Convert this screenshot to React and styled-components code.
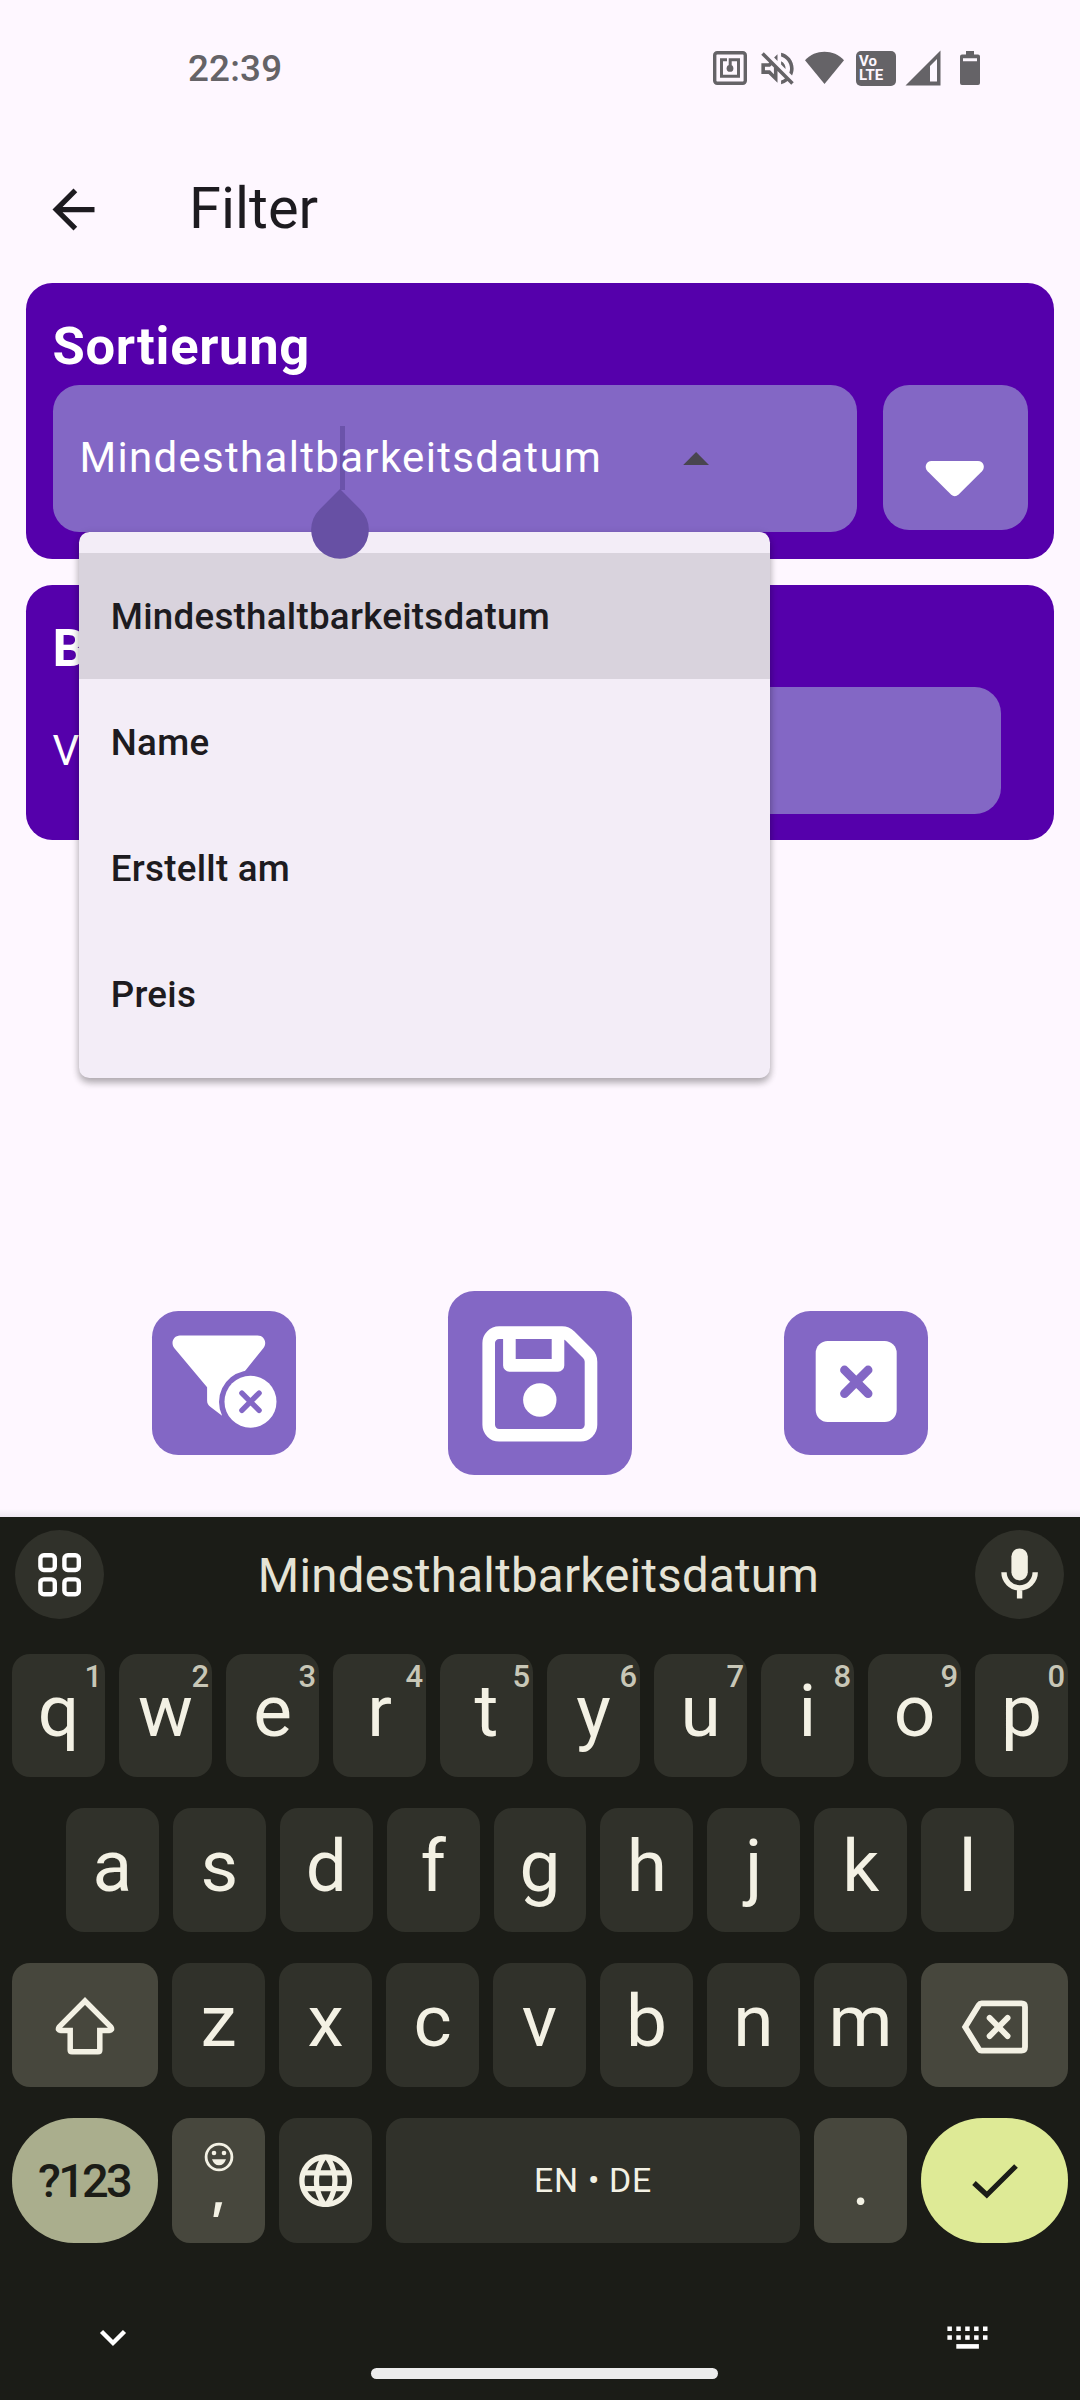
import React from "react";
import styled, { createGlobalStyle, css } from "styled-components";
import { MdLanguage, MdOutlineVolumeOff } from "react-icons/md";

const c = {
  surface: "#fef7ff",
  card: "#5500ab",
  control: "#8367c5",
  primary: "#6750a4",
  ink: "#1d1b20",
  menu: "#f3edf7",
  menuActive: "#d9d3dd",
  status: "#656367",
  kbd: "#1b1c17",
  key: "#30312a",
  keyAlt: "#47473d",
  keyText: "#f3f1e4",
  hint: "#c8c7b7",
};

const GlobalStyle = createGlobalStyle`
  * { box-sizing: border-box; }
  body {
    margin: 0;
    background: ${c.surface};
    font-family: Roboto, "Noto Sans", sans-serif;
    color: ${c.ink};
  }
  svg { display: block; flex: none; }
`;

const Screen = styled.div`
  width: 1080px;
  height: 2400px;
  display: flex;
  flex-direction: column;
  overflow: hidden;
`;

const Page = styled.main`
  position: relative;
  height: 1517px;
  flex: none;
  display: flex;
  flex-direction: column;
`;

const KeyboardShade = styled.div`
  position: absolute;
  left: 0;
  right: 0;
  bottom: 0;
  height: 8px;
  background: linear-gradient(rgba(60, 50, 80, 0), rgba(60, 50, 80, 0.08));
`;

/* status bar */
const StatusBar = styled.header`
  height: 136px;
  display: flex;
  align-items: center;
  justify-content: space-between;
  padding: 0 100px 0 188px;
  color: ${c.status};
`;

const Clock = styled.span`
  font-size: 36.75px;
  font-weight: 500;
  line-height: 44px;
  letter-spacing: 0.2px;
  padding-top: 2px;
`;

const StatusIcons = styled.div`
  display: flex;
  align-items: center;
  height: 36px;
`;

const StatusSlot = styled.span`
  display: flex;
  justify-content: center;
  align-items: center;
  width: ${(p) => p.$w}px;
  height: 36px;
  margin-left: ${(p) => p.$gap || 0}px;
`;

const VoLte = styled.span`
  display: flex;
  flex-direction: column;
  width: 40px;
  height: 35px;
  padding: 3px 0 0 3px;
  border-radius: 5px;
  background: ${c.status};
  color: ${c.surface};
  font-size: 15px;
  line-height: 14.6px;
  font-weight: 700;
`;

/* app bar */
const AppBar = styled.div`
  height: 147px;
  display: flex;
  align-items: center;
  padding-left: 42px;
  gap: 84px;
`;

const Title = styled.h1`
  margin: 0;
  padding-bottom: 4px;
  font-size: 57.75px;
  font-weight: 400;
  line-height: 74px;
`;

/* cards */
const Card = styled.section`
  margin: 0 26.25px 26.25px;
  padding: 26.25px;
  border-radius: 26.25px;
  background: ${c.card};
  color: #fff;
`;

const CardTitle = styled.h2`
  margin: 0;
  height: 76px;
  font-size: 52.5px;
  font-weight: 700;
  line-height: 75px;
  letter-spacing: 0.7px;
`;

const SortRow = styled.div`
  display: flex;
  gap: 26.25px;
  height: 147.2px;
`;

const SortField = styled.div`
  position: relative;
  flex: 1;
  display: flex;
  align-items: center;
  justify-content: space-between;
  padding: 0 147.4px 0 27px;
  border-radius: 26.25px;
  background: ${c.control};
`;

const FieldValue = styled.span`
  position: relative;
  z-index: 1;
  padding-bottom: 3px;
  font-size: 42px;
  line-height: 63px;
  letter-spacing: 1.31px;
`;

const Caret = styled.i`
  position: absolute;
  left: 287.5px;
  top: 41px;
  width: 5.25px;
  height: 64px;
  background: ${c.primary};
  opacity: 0.85;
`;

const CaretHandle = styled.svg`
  position: absolute;
  z-index: 3;
  left: 258.6px;
  top: 104px;
`;

const SquareButton = styled.button`
  width: ${(p) => p.$size}px;
  height: ${(p) => p.$size}px;
  padding: 0;
  border: 0;
  border-radius: 26.25px;
  background: ${c.control};
  color: #fff;
`;

const Menu = styled.ul`
  position: absolute;
  z-index: 2;
  left: 26.25px;
  top: 147.2px;
  width: 691.3px;
  margin: 0;
  padding: 21px 0;
  list-style: none;
  border-radius: 10.5px;
  background: ${c.menu};
  box-shadow: 0 5px 7px rgba(0, 0, 0, 0.24), 0 2px 8px rgba(0, 0, 0, 0.14);
`;

const MenuItem = styled.li`
  height: 126px;
  padding-left: 32px;
  font-size: 36.75px;
  font-weight: 500;
  line-height: 127px;
  letter-spacing: 0.26px;
  color: ${c.ink};
  background: ${(p) => (p.$active ? c.menuActive : "transparent")};
`;

const ConditionRow = styled.div`
  display: flex;
  align-items: center;
  height: 126.4px;
  padding-right: 26.25px;
  gap: 120px;
  font-size: 42px;
`;

const ConditionField = styled.div`
  flex: 1;
  height: 100%;
  border-radius: 26.25px;
  background: ${c.control};
`;

const Actions = styled.div`
  margin: auto 152px 42px;
  display: flex;
  align-items: center;
  justify-content: space-between;
`;

/* keyboard */
const Keyboard = styled.section`
  flex: 1;
  display: flex;
  flex-direction: column;
  background: ${c.kbd};
  color: ${c.keyText};
`;

const SuggestionBar = styled.div`
  display: flex;
  align-items: center;
  justify-content: space-between;
  height: 137px;
  padding: 0 16px 22px 15px;
`;

const RoundButton = styled.div`
  width: 89px;
  height: 89px;
  border-radius: 50%;
  background: ${c.key};
`;

const Suggestion = styled.span`
  padding: 3px 2px 0 0;
  font-size: 47.4px;
  line-height: 60px;
  letter-spacing: 0.3px;
  color: #e5e3d6;
`;

const Keys = styled.div`
  display: flex;
  flex-direction: column;
  gap: 31px;
  padding: 0 12px;
`;

const KeyRow = styled.div`
  display: flex;
  gap: 14px;
  height: ${(p) => p.$h || 124}px;
  padding: 0 ${(p) => p.$inset || 0}px;
`;

const tones = {
  normal: css`
    background: ${c.key};
  `,
  alt: css`
    background: ${c.keyAlt};
  `,
  symbols: css`
    background: #aaae8d;
    color: ${c.kbd};
    border-radius: 62px;
  `,
  enter: css`
    background: #deea96;
    color: ${c.kbd};
    border-radius: 62px;
  `,
};

const Key = styled.div`
  position: relative;
  flex: ${(p) => (p.$w ? `0 0 ${p.$w}px` : "1 1 0")};
  display: flex;
  flex-direction: column;
  align-items: center;
  justify-content: center;
  padding-top: ${(p) => p.$drop || 0}px;
  border-radius: 18px;
  ${(p) => tones[p.$tone || "normal"]}
`;

const Letter = styled.span`
  font-size: 73px;
  line-height: 84px;
  padding-bottom: 9px;
`;

const Hint = styled.span`
  position: absolute;
  right: 3px;
  top: 5px;
  font-size: 31px;
  line-height: 36px;
  font-weight: 500;
  color: ${c.hint};
`;

const SymbolsLabel = styled.span`
  font-size: 47px;
  line-height: 56px;
  font-weight: 500;
  letter-spacing: -2.8px;
  padding-right: 2px;
`;

const SpaceLabel = styled.span`
  font-size: 33.8px;
  line-height: 40px;
  letter-spacing: 0.7px;
`;

const Punct = styled.span`
  height: 48px;
  font-family: ${(p) => p.$font}, Roboto, sans-serif;
  font-size: ${(p) => p.$size}px;
  font-weight: ${(p) => p.$weight};
  line-height: ${(p) => p.$line}px;
`;

const NavBar = styled.nav`
  flex: 1;
  display: grid;
  grid-template-columns: 371px 347px 1fr;
`;

const NavCell = styled.div`
  padding: ${(p) => p.$pad};
`;

const HomePill = styled.div`
  align-self: end;
  height: 11px;
  margin-bottom: 21px;
  border-radius: 6px;
  background: #ececec;
`;

const NfcIcon = () => (
  <svg width="34" height="34" viewBox="0 0 34 34" fill="none" stroke="currentColor">
    <rect x="1.7" y="1.7" width="30.6" height="30.6" rx="2.5" strokeWidth="3.4" />
    <path d="M14 8.7H8.5V25.3H25.5V8.7H17.2V16" strokeWidth="3" />
    <circle cx="17" cy="17.4" r="3.4" fill="currentColor" stroke="none" />
  </svg>
);

const WifiIcon = () => (
  <svg width="39" height="34" viewBox="0 0 39 34">
    <path d="M0 9.3C5.4 3.6 12 .8 19.5.8S33.600 3.600 39 9.300L19.500 33z" fill="currentColor" />
  </svg>
);

const SignalIcon = () => (
  <svg width="36" height="36" viewBox="0 0 36 36">
    <path fillRule="evenodd" d="M.5 35.500 35.500.5V35.500zM25 16V31.500H32V9z" fill="currentColor" />
  </svg>
);

const BatteryIcon = () => (
  <svg width="20" height="34" viewBox="0 0 20 34">
    <path
      fillRule="evenodd"
      d="M6 0h8v3.500h4a2 2 0 0 1 2 2V32a2 2 0 0 1-2 2H2a2 2 0 0 1-2-2V5.500a2 2 0 0 1 2-2h4zM3 7.300V10.200H17V7.300z"
      fill="currentColor"
    />
  </svg>
);

const BackIcon = () => (
  <svg width="63" height="63" viewBox="0 0 24 24">
    <path d="M20 11H7.830l5.590-5.590L12 4l-8 8 8 8 1.410-1.410L7.830 13H20v-2z" fill={c.ink} />
  </svg>
);

const SortDownIcon = () => (
  <svg width="144.500" height="144.500" viewBox="0 0 144.500 144.500">
    <path
      d="M48.500 76H95c5.500 0 7.700 6.300 4 10.300L75.600 109.600q-3.900 3.200-7.600 0L44.600 86.300C40.800 82.300 43 76 48.500 76z"
      fill="currentColor"
    />
  </svg>
);

const FilterOffIcon = () => (
  <svg width="144.400" height="144.400" viewBox="0 0 144.400 144.400">
    <path
      d="M28 24.400H105.500C112.500 24.400 115.500 32 111.300 37.200L93.600 59.200Q92.900 60 91.500 60.200A31.700 31.700 0 0 0 70.100 104.700L58.300 95.800Q55.100 93.500 55.100 89.500V76.300L22.400 37.200C18.200 32 21.400 24.400 28 24.400z"
      fill="currentColor"
    />
    <circle cx="98.500" cy="90.700" r="26" fill="currentColor" />
    <path d="M89.900 82.100 107.100 99.300M107.100 82.100 89.900 99.300" stroke={c.control} strokeWidth="5.400" strokeLinecap="round" />
  </svg>
);

const SaveIcon = () => (
  <svg width="184" height="184" viewBox="0 0 184 184" fill="none" stroke="currentColor" strokeWidth="12.600">
    <path d="M51.200 41.600H114C117.200 41.600 119.700 42.700 122 45L139.500 62.500C141.900 64.900 143 67.500 143 70.700V133.800A10.500 10.500 0 0 1 132.500 144.300H51.200A10.500 10.500 0 0 1 40.700 133.800V52.100A10.500 10.500 0 0 1 51.200 41.600z" />
    <path d="M61.400 43V74.400H110V43" strokeLinejoin="round" />
    <circle cx="91.800" cy="109" r="16.700" fill="currentColor" stroke="none" />
  </svg>
);

const CloseBoxIcon = () => (
  <svg width="144.400" height="144.400" viewBox="0 0 144.400 144.400">
    <rect x="31.700" y="30" width="81" height="81" rx="12" fill="currentColor" />
    <path d="M60.500 59 84.100 82.600M84.100 59 60.500 82.600" stroke={c.control} strokeWidth="8.800" strokeLinecap="round" />
  </svg>
);

const GridIcon = () => (
  <svg width="89" height="89" viewBox="0 0 89 89" fill="none" stroke="#fff" strokeWidth="4.400">
    <rect x="25.400" y="25.200" width="14.400" height="14.800" rx="3.500" />
    <rect x="49.400" y="25.200" width="14.400" height="14.800" rx="3.500" />
    <rect x="25.400" y="49.400" width="14.400" height="14.800" rx="3.500" />
    <rect x="49.400" y="49.400" width="14.400" height="14.800" rx="3.500" />
  </svg>
);

const MicIcon = () => (
  <svg width="89" height="89" viewBox="0 0 89 89" fill="none" stroke={c.keyText}>
    <rect x="36.400" y="18.400" width="16.400" height="32" rx="8.200" fill={c.keyText} stroke="none" />
    <path d="M29 42.300A15.600 15.600 0 0 0 60.200 42.300M44.600 58V68.600" strokeWidth="5.400" />
  </svg>
);

const ShiftIcon = () => (
  <svg width="62" height="60" viewBox="0 0 62 60" fill="none" stroke="currentColor" strokeWidth="5.500">
    <path d="M31 4 56.800 29.900Q59 33.500 55 33.500H45.800V53Q45.800 54.800 44 54.800H18Q16.200 54.800 16.200 53V33.500H7Q3 33.500 5.200 29.900z" />
  </svg>
);

const BackspaceIcon = () => (
  <svg width="68" height="54" viewBox="0 0 68 54" fill="none" stroke="currentColor" strokeWidth="5.800" strokeLinecap="round">
    <path d="M20.500 3.400H60.500Q64 3.400 64 6.900V47.100Q64 50.600 60.500 50.600H20.500Q18.800 50.600 17.800 49L4.200 27 17.800 5Q18.800 3.400 20.500 3.400z" />
    <path d="M28.600 17.900 46.600 36.100M46.600 17.900 28.600 36.100" />
  </svg>
);

const SmileIcon = () => (
  <svg width="30" height="30" viewBox="0 0 30 30" fill="currentColor">
    <circle cx="15" cy="15" r="12.900" fill="none" stroke="currentColor" strokeWidth="2.800" />
    <circle cx="10" cy="11" r="2.300" />
    <circle cx="20" cy="11" r="2.300" />
    <path d="M8 17.300H22Q20 23.300 15 23.300T8 17.300z" />
  </svg>
);

const CheckIcon = () => (
  <svg width="48" height="40" viewBox="0 0 48 40" fill="none" stroke="currentColor" strokeWidth="5.200">
    <path d="M3 22 15.800 34 45 5" />
  </svg>
);

const KeyboardIcon = () => (
  <svg width="42" height="24" viewBox="0 0 42 24" fill="#fff">
    {[0, 1, 2, 3, 4].map((i) => (
      <React.Fragment key={i}>
        <rect x={0.4 + i * 8.900} y="0.500" width="4.500" height="4.500" />
        <rect x={0.4 + i * 8.900} y="9.300" width="4.500" height="4.500" />
      </React.Fragment>
    ))}
    <rect x="9.300" y="18.100" width="22.600" height="4.600" />
  </svg>
);

const options = ["Mindesthaltbarkeitsdatum", "Name", "Erstellt am", "Preis"];

export default function App() {
  return (
    <Screen>
      <GlobalStyle />
      <Page>
        <StatusBar>
          <Clock>22:39</Clock>
          <StatusIcons>
            <StatusSlot $w={34}><NfcIcon /></StatusSlot>
            <StatusSlot $w={32} $gap={14}><MdOutlineVolumeOff size={43} /></StatusSlot>
            <StatusSlot $w={39} $gap={12}><WifiIcon /></StatusSlot>
            <StatusSlot $w={40} $gap={12}>
              <VoLte><span>Vo</span><span>LTE</span></VoLte>
            </StatusSlot>
            <StatusSlot $w={36} $gap={9}><SignalIcon /></StatusSlot>
            <StatusSlot $w={20} $gap={19}><BatteryIcon /></StatusSlot>
          </StatusIcons>
        </StatusBar>
        <AppBar>
          <BackIcon />
          <Title>Filter</Title>
        </AppBar>

        <Card>
          <CardTitle>Sortierung</CardTitle>
          <SortRow>
            <SortField>
              <Caret />
              <FieldValue>{options[0]}</FieldValue>
              <svg width="26.250" height="13.200" viewBox="0 0 26.250 13.200">
                <path d="M0 13.200 13.120 0 26.250 13.200z" fill="#49454f" />
              </svg>
              <Menu>
                {options.map((o, i) => (
                  <MenuItem key={o} $active={i === 0}>{o}</MenuItem>
                ))}
              </Menu>
              <CaretHandle width="58" height="70" viewBox="0 0 58 70">
                <path d="M29 0 49.400 20.400A28.880 28.880 0 1 1 8.600 20.400z" fill={c.primary} />
              </CaretHandle>
            </SortField>
            <SquareButton $size={144.4}><SortDownIcon /></SquareButton>
          </SortRow>
        </Card>

        <Card>
          <CardTitle>B</CardTitle>
          <ConditionRow>
            <span>V</span>
            <ConditionField />
          </ConditionRow>
        </Card>

        <Actions>
          <SquareButton $size={144.4}><FilterOffIcon /></SquareButton>
          <SquareButton $size={184}><SaveIcon /></SquareButton>
          <SquareButton $size={144.4}><CloseBoxIcon /></SquareButton>
        </Actions>
        <KeyboardShade />
      </Page>

      <Keyboard>
        <SuggestionBar>
          <RoundButton><GridIcon /></RoundButton>
          <Suggestion>{options[0]}</Suggestion>
          <RoundButton><MicIcon /></RoundButton>
        </SuggestionBar>
        <Keys>
          <KeyRow $h={123}>
            {[..."qwertyuiop"].map((l, i) => (
              <Key key={l}>
                <Letter>{l}</Letter>
                <Hint>{(i + 1) % 10}</Hint>
              </Key>
            ))}
          </KeyRow>
          <KeyRow $inset={54}>
            {[..."asdfghjkl"].map((l) => (
              <Key key={l}><Letter>{l}</Letter></Key>
            ))}
          </KeyRow>
          <KeyRow>
            <Key $w={146} $tone="alt" $drop={3}><ShiftIcon /></Key>
            {[..."zxcvbnm"].map((l) => (
              <Key key={l}><Letter>{l}</Letter></Key>
            ))}
            <Key $w={147} $tone="alt" $drop={4}><BackspaceIcon /></Key>
          </KeyRow>
          <KeyRow $h={125}>
            <Key $w={146} $tone="symbols"><SymbolsLabel>?123</SymbolsLabel></Key>
            <Key $w={93} $tone="alt">
              <SmileIcon />
              <Punct $font="Inter" $size={50} $weight={600} $line={36}>,</Punct>
            </Key>
            <Key $w={93}><MdLanguage size={63.4} /></Key>
            <Key><SpaceLabel>EN • DE</SpaceLabel></Key>
            <Key $w={93} $tone="alt">
              <Punct $font="Lato" $size={60} $weight={400} $line={50}>.</Punct>
            </Key>
            <Key $w={147} $tone="enter"><CheckIcon /></Key>
          </KeyRow>
        </Keys>
        <NavBar>
          <NavCell $pad="86px 0 0 99px">
            <svg width="28" height="18" viewBox="0 0 28 18">
              <path d="M2.500 2.500 14 14 25.500 2.500" fill="none" stroke="#fff" strokeWidth="4.400" />
            </svg>
          </NavCell>
          <HomePill />
          <NavCell $pad="83px 0 0 229px"><KeyboardIcon /></NavCell>
        </NavBar>
      </Keyboard>
    </Screen>
  );
}
